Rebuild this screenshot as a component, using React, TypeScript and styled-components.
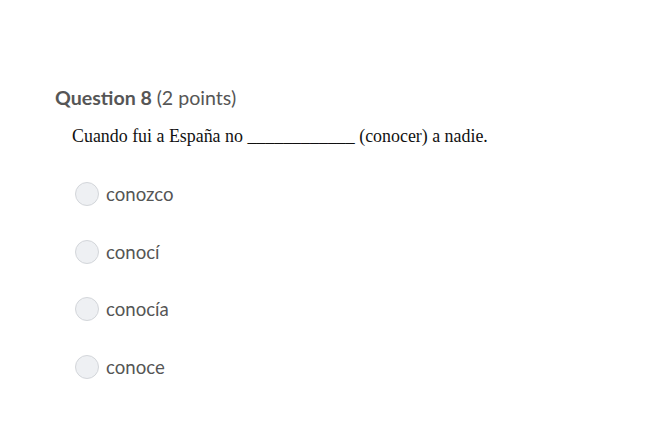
import styled, { createGlobalStyle } from 'styled-components';

const GlobalStyle = createGlobalStyle`
  body {
    margin: 0;
    background: #ffffff;
  }
`;

const Page = styled.div`
  padding: 85px 0 0 55px;
  font-family: 'Lato', sans-serif;
  color: #555555;
`;

const Title = styled.h2`
  margin: 0;
  font-size: 19.6px;
  font-weight: 700;
  line-height: 26px;
  color: #565656;

  span {
    font-weight: 400;
  }
`;

const Prompt = styled.p`
  margin: 14px 0 0 17px;
  font-family: 'Liberation Serif', serif;
  font-size: 17.9px;
  line-height: 22px;
  color: #111111;
`;

const Options = styled.div`
  display: flex;
  flex-direction: column;
  gap: 33px;
  margin: 35px 0 0 20px;
`;

const Option = styled.label`
  display: flex;
  align-items: center;
  gap: 7px;
  height: 24.5px;
  font-size: 18.6px;
  color: #555555;
`;

const Radio = styled.span`
  box-sizing: border-box;
  width: 24px;
  height: 24px;
  border-radius: 50%;
  border: 1px solid #d3d6da;
  background: #eef0f3;
`;

const choices = ['conozco', 'conocí', 'conocía', 'conoce'];

export default function App() {
  return (
    <Page>
      <GlobalStyle />
      <Title>
        Question 8 <span>(2 points)</span>
      </Title>
      <Prompt>Cuando fui a España no ____________ (conocer) a nadie.</Prompt>
      <Options>
        {choices.map((c) => (
          <Option key={c}>
            <Radio />
            {c}
          </Option>
        ))}
      </Options>
    </Page>
  );
}
